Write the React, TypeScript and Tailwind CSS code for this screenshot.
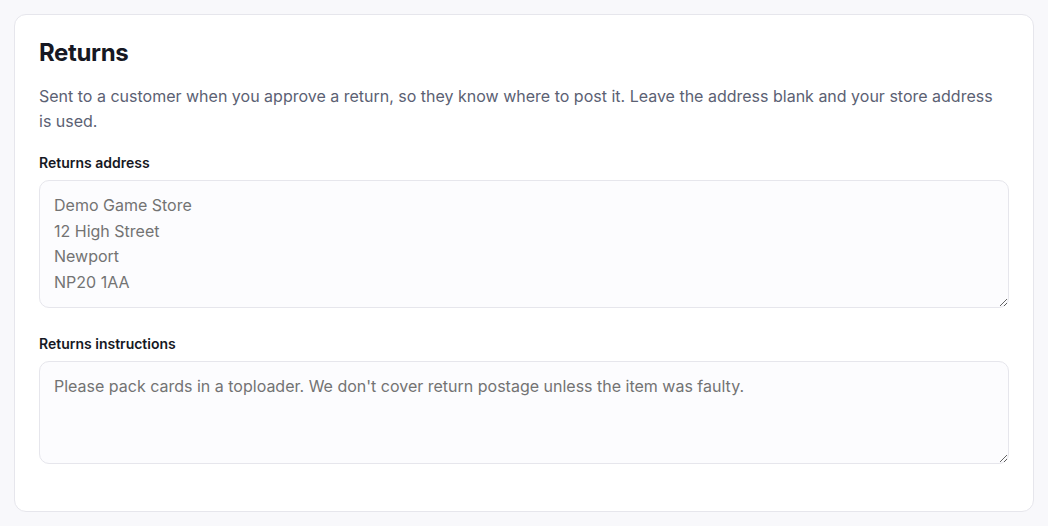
import React from "react";

export default function App() {
  const font = { fontFamily: "Inter, 'Noto Sans', sans-serif" };
  return (
    <div className="min-h-[526px] w-full bg-[#f8f8fb] p-[14px]" style={font}>
      <div className="rounded-[12px] border border-[#e6e6ec] bg-white px-6 pt-6 pb-[47px]">
        <h2 className="text-[24px] font-bold leading-7 tracking-[-0.015em] text-[#161823]">Returns</h2>
        <p className="mt-[17px] text-[16px] leading-[25px] text-[#5b6173]">
          Sent to a customer when you approve a return, so they know where to post it. Leave the address blank and your store address is used.
        </p>
        <div className="mt-[19px]">
          <label className="block text-[14px] font-semibold leading-5 text-[#161823]">Returns address</label>
          <textarea
            rows={4}
            placeholder={"Demo Game Store\n12 High Street\nNewport\nNP20 1AA"}
            className="mt-[7px] block h-[128px] w-full rounded-[10px] border border-[#e6e6ec] bg-[#fcfcfe] px-[14px] py-3 text-[16px] leading-[25.6px] text-[#161823] placeholder:text-[#737373] outline-none"
            style={font}
          />
        </div>
        <div className="mt-[26px]">
          <label className="block text-[14px] font-semibold leading-5 text-[#161823]">Returns instructions</label>
          <textarea
            rows={3}
            placeholder="Please pack cards in a toploader. We don't cover return postage unless the item was faulty."
            className="mt-[7px] block h-[103px] w-full rounded-[10px] border border-[#e6e6ec] bg-[#fcfcfe] px-[14px] py-3 text-[16px] leading-[25.6px] text-[#161823] placeholder:text-[#737373] outline-none"
            style={font}
          />
        </div>
      </div>
    </div>
  );
}
